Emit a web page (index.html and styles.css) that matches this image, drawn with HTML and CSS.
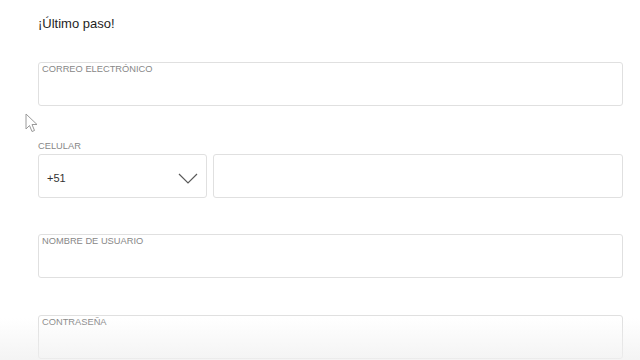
FILE: index.html
```html
<!DOCTYPE html>
<html lang="es">
<head>
    <meta charset="UTF-8">
    <title>Registro</title>
    <link rel="stylesheet" href="styles.css">
</head>
<body>
    <div class="page">
        <h2 class="title">¡Último paso!</h2>

        <div class="field field-email">
            <span class="field-label">CORREO ELECTRÓNICO</span>
        </div>

        <div class="phone-group">
            <span class="group-label">CELULAR</span>
            <div class="phone-row">
                <div class="field prefix">
                    <span class="prefix-value">+51</span>
                    <svg class="chevron" width="20" height="11" viewBox="0 0 20 11">
                        <path d="M1 1 L10 10 L19 1" fill="none" stroke="#5a5a5a" stroke-width="1.2"/>
                    </svg>
                </div>
                <div class="field number"></div>
            </div>
        </div>

        <div class="field field-user">
            <span class="field-label">NOMBRE DE USUARIO</span>
        </div>

        <div class="field field-pass">
            <span class="field-label">CONTRASEÑA</span>
        </div>
    </div>

    <!-- puntero del ratón sobre la página -->
    <svg class="cursor" width="13" height="20" viewBox="0 0 13 20">
        <path d="M1 1 L1 16 L4.5 12.5 L7 18.5 L9.5 17.5 L7 11.5 L12 11.5 Z" fill="#fff" stroke="#9a9a9a" stroke-width="1"/>
    </svg>

    <div class="bottom-fade"></div>
</body>
</html>
```

FILE: styles.css
```css
body {
    margin: 0;
    background-color: #fff;
    font-family: "Liberation Sans", Arial, sans-serif;
    color: #222;
    overflow: hidden;
}

.page {
    width: 585px;
    padding: 16px 0 0 38px;
}

.title {
    margin: 0;
    font-size: 13px;
    font-weight: normal;
    line-height: 16px;
    color: #1e1e1e;
}

.field {
    box-sizing: border-box;
    height: 44px;
    border: 1px solid #e0e0e0;
    border-radius: 3px;
    background-color: #fff;
    padding: 1px 3px 0;
}

.field-label,
.group-label {
    display: block;
    font-size: 9.3px;
    line-height: 11px;
    color: #878787;
}

.field-email {
    margin-top: 30px;
}

.phone-group {
    margin-top: 35px;
}

.group-label {
    margin-bottom: 2px;
}

.phone-row {
    display: flex;
    gap: 6px;
}

.prefix {
    width: 169px;
    display: flex;
    align-items: center;
    justify-content: space-between;
    padding: 4px 8px 0 8px;
}

.prefix-value {
    font-size: 11px;
    color: #333;
}

.chevron {
    margin-top: 1px;
}

.number {
    flex: 1;
}

.field-user {
    margin-top: 36px;
}

.field-pass {
    margin-top: 37px;
}

.cursor {
    position: absolute;
    left: 25px;
    top: 113px;
}

.bottom-fade {
    position: absolute;
    left: 0;
    right: 0;
    bottom: 0;
    height: 42px;
    background: linear-gradient(to bottom, rgba(240, 240, 240, 0), rgba(240, 240, 240, 0.75));
    pointer-events: none;
}
```
